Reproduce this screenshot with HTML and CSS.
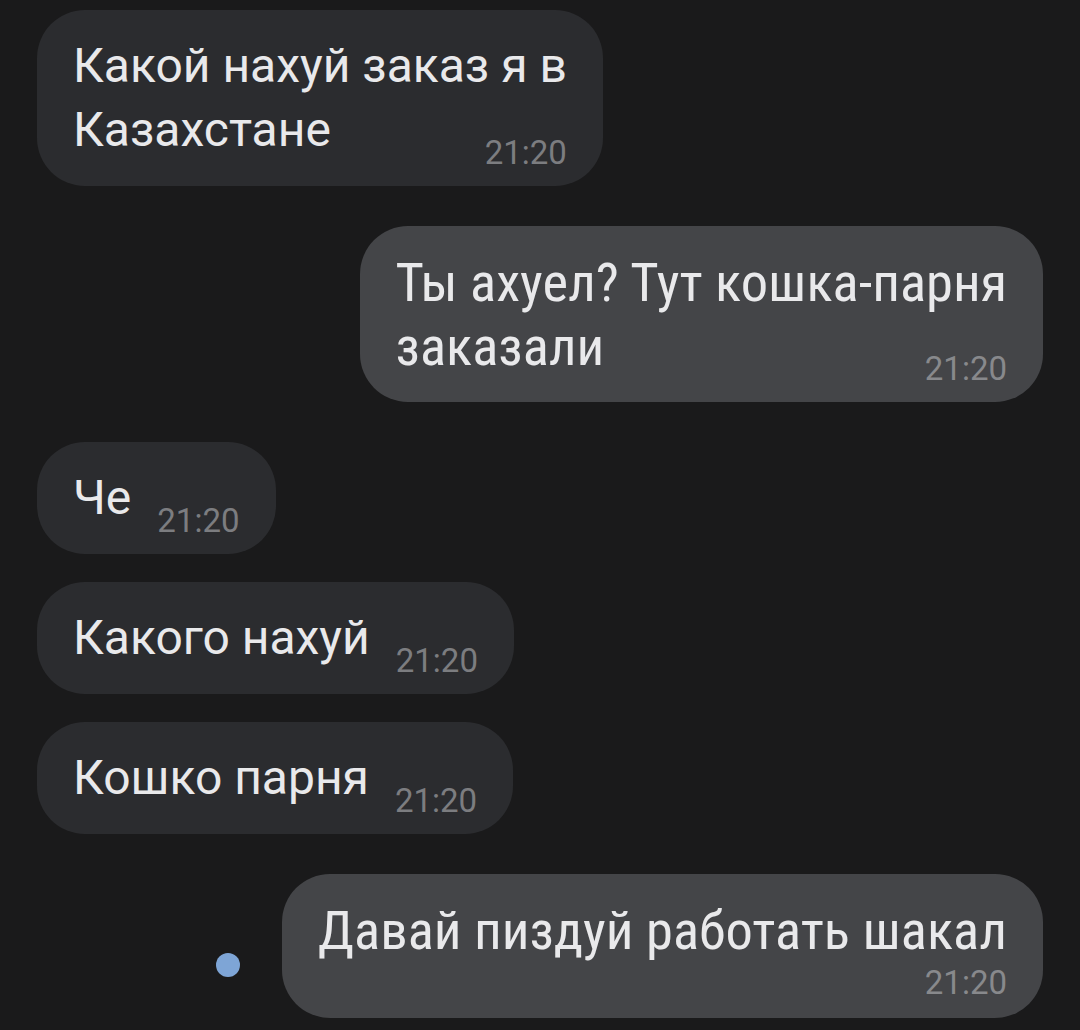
FILE: index.html
```html
<!DOCTYPE html>
<html lang="ru">
<head>
<meta charset="utf-8">
<title>Чат</title>
<link rel="stylesheet" href="styles.css">
</head>
<body>
<main class="chat">
  <div class="row row--in">
    <div class="bubble"><span class="text">Какой нахуй заказ я в<br>Казахстане</span><span class="time">21:20</span></div>
  </div>
  <div class="row row--out row--switch">
    <div class="bubble"><span class="text">Ты ахуел? Тут кошка-парня<br>заказали</span><span class="time">21:20</span></div>
  </div>
  <div class="row row--in row--switch">
    <div class="bubble"><span class="text">Че</span><span class="time">21:20</span></div>
  </div>
  <div class="row row--in">
    <div class="bubble"><span class="text">Какого нахуй</span><span class="time">21:20</span></div>
  </div>
  <div class="row row--in">
    <div class="bubble"><span class="text">Кошко парня</span><span class="time">21:20</span></div>
  </div>
  <div class="row row--out row--switch">
    <span class="status-dot"></span>
    <div class="bubble bubble--time-below"><span class="text">Давай пиздуй работать шакал</span><span class="time">21:20</span></div>
  </div>
</main>
</body>
</html>
```

FILE: styles.css
```css
html, body {
  margin: 0;
  padding: 0;
  background: #1a1a1b;
}

body {
  width: 1080px;
  height: 1030px;
  overflow: hidden;
  font-family: Roboto, "Noto Sans", sans-serif;
  color: #e9e9eb;
}

.chat {
  display: flex;
  flex-direction: column;
  gap: 28px;
  padding: 10px 37px 0 37px;
}

.row {
  display: flex;
  align-items: flex-end;
}

.row--switch {
  margin-top: 12px;
}

.row--in {
  justify-content: flex-start;
}

.row--out {
  justify-content: flex-end;
}

.bubble {
  display: flow-root;
  padding: 24px 36px 24px 36px;
  border-radius: 48px;
  background: #2b2c2f;
  font-size: 48px;
  line-height: 64px;
  white-space: nowrap;
}

.row--out .bubble {
  background: #444548;
  font-family: "Roboto Condensed", Roboto, sans-serif;
  font-stretch: 75%;
  font-size: 54.5px;
}

.time {
  float: right;
  position: relative;
  top: 23px;
  margin-left: 26px;
  font-family: Roboto, "Noto Sans", sans-serif;
  font-stretch: 100%;
  font-size: 33px;
  line-height: 64px;
  color: #7c7d80;
}

.row--out .time {
  color: #88898c;
}

.bubble--time-below {
  padding-bottom: 15px;
}

.bubble--time-below .time {
  float: none;
  display: block;
  top: 0;
  margin-left: 0;
  text-align: right;
  line-height: 41px;
}

.status-dot {
  width: 24px;
  height: 24px;
  border-radius: 50%;
  background: #7ea5d6;
  margin: 0 42px 41px 0;
  flex: none;
}
```
